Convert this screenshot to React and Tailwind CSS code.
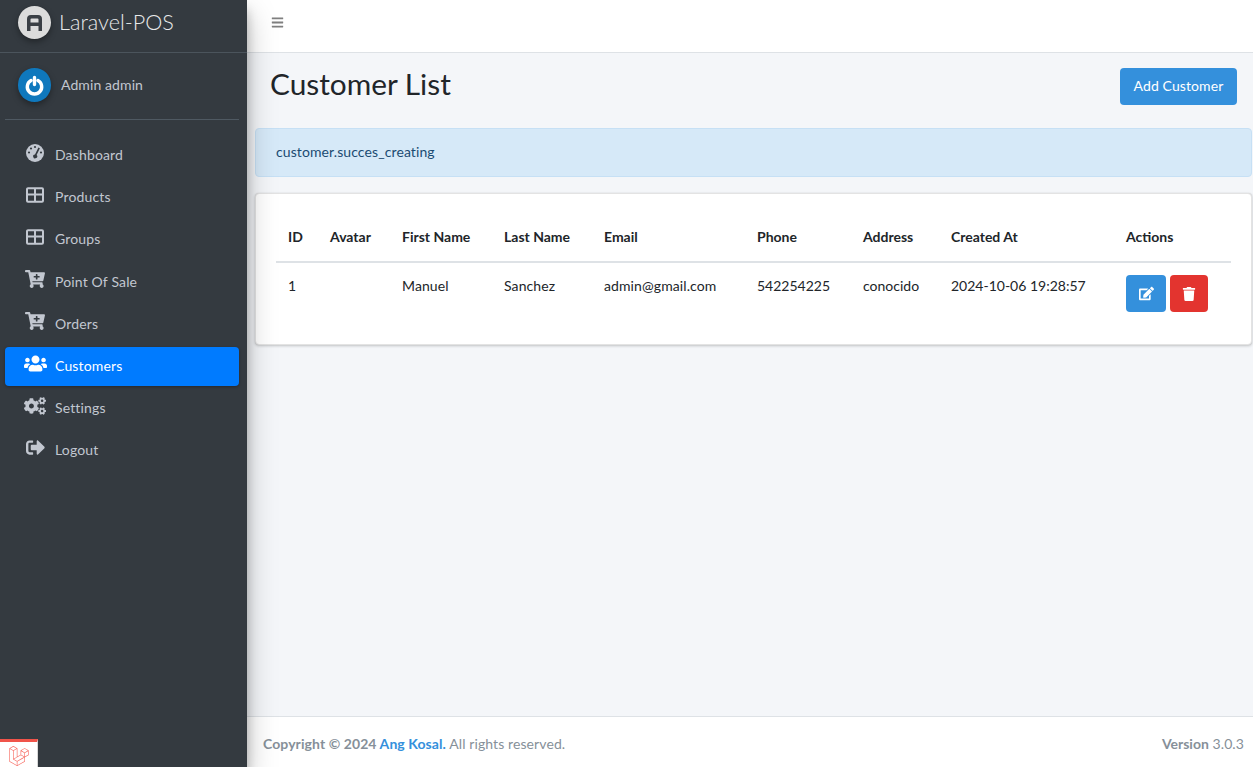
import React from "react";
import { FaCartPlus, FaUsers, FaCogs, FaSignOutAlt, FaEdit, FaTrash, FaBars } from "react-icons/fa";
import { SiLaravel } from "react-icons/si";

function TableIcon() {
  return (
    <svg width="18" height="16" viewBox="0 0 18 16" className="text-[#c2c7d0]">
      <path fill="none" stroke="currentColor" strokeWidth="2" d="M1 2.2a1 1 0 0 1 1-1h14a1 1 0 0 1 1 1v11.6a1 1 0 0 1-1 1H2a1 1 0 0 1-1-1zM1 7.5h16M9 1.2v13.6" />
    </svg>
  );
}

function GaugeIcon() {
  return (
    <svg width="18" height="18" viewBox="0 0 18 18">
      <circle cx="9" cy="9" r="9" fill="#c2c7d0" />
      <g fill="#343a40">
        <circle cx="5" cy="4.5" r="1.1" />
        <circle cx="9" cy="3" r="1.1" />
        <circle cx="3" cy="8.5" r="1.1" />
        <circle cx="15" cy="8.5" r="1.1" />
        <path d="M12.4 3.6l1.5.6L10.6 11a2 2 0 1 1-1.6-.6z" />
      </g>
    </svg>
  );
}

const nav = [
  { label: "Dashboard", icon: <GaugeIcon /> },
  { label: "Products", icon: <TableIcon /> },
  { label: "Groups", icon: <TableIcon /> },
  { label: "Point Of Sale", icon: <FaCartPlus size={20} /> },
  { label: "Orders", icon: <FaCartPlus size={20} /> },
  { label: "Customers", icon: <FaUsers size={23} />, active: true },
  { label: "Settings", icon: <FaCogs size={22} /> },
  { label: "Logout", icon: <FaSignOutAlt size={19} /> },
];

const heads = [
  ["ID", "w-[42px]"], ["Avatar", "w-[72px]"], ["First Name", "w-[102px]"], ["Last Name", "w-[100px]"],
  ["Email", "w-[153px]"], ["Phone", "w-[106px]"], ["Address", "w-[88px]"], ["Created At", "w-[175px]"], ["Actions", ""],
];
const cells = ["1", "", "Manuel", "Sanchez", "admin@gmail.com", "542254225", "conocido", "2024-10-06 19:28:57"];

export default function App() {
  return (
    <div className="flex h-[767px] w-[1253px] overflow-hidden bg-[#f4f6f9] text-[14px] tracking-[0.1px] text-[#212529] font-['Lato','Open_Sans',sans-serif]">
      <aside className="relative z-10 flex w-[247px] shrink-0 flex-col bg-[#343a40] shadow-[0_14px_28px_rgba(0,0,0,0.25),0_10px_10px_rgba(0,0,0,0.22)]">
        <div className="flex h-[53px] shrink-0 items-center gap-[8px] border-b border-[#4b545c] pb-[7px] pl-[18px]">
          <div className="flex h-[33px] w-[33px] items-center justify-center rounded-full bg-[#dcdcdc] shadow-[0_3px_6px_rgba(0,0,0,0.35)]">
            <svg width="19" height="19" viewBox="0 0 19 19">
              <path fill="#3a3f45" fillRule="evenodd" d="M2 18V6a4 4 0 0 1 4-4h7a4 4 0 0 1 4 4v12h-3.5v-5h-8v5zM5.5 9.5h8V6.5a1 1 0 0 0-1-1h-6a1 1 0 0 0-1 1z" />
            </svg>
          </div>
          <span className="text-[21.6px] font-light tracking-normal text-[#e8e9ea]">Laravel-POS</span>
        </div>
        <div className="ml-[5px] flex h-[67px] w-[234px] shrink-0 items-center gap-[10px] border-b border-[#4f5962] pl-[13px] pb-[2px]">
          <div className="flex h-[34px] w-[33px] items-center justify-center rounded-full bg-[#0f78bd] shadow-[0_3px_6px_rgba(0,0,0,0.35)]">
            <svg width="21" height="21" viewBox="0 0 21 21" fill="none" stroke="#fff" strokeWidth="3.4" strokeLinecap="round">
              <path d="M7 5.5a7.2 7.2 0 1 0 7 0M10.5 2.5v7" />
            </svg>
          </div>
          <span className="pb-[1px] text-[#c2c7d0]">Admin admin</span>
        </div>
        <nav className="ml-[5px] mt-[16px] flex w-[234px] flex-col gap-[3.2px]">
          {nav.map((n) => (
            <div
              key={n.label}
              className={`flex h-[39px] items-center rounded-[4px] ${n.active ? "bg-[#007bff] text-white shadow-[0_1px_3px_rgba(0,0,0,0.3)]" : "text-[#c2c7d0]"}`}
            >
              <span className="flex w-[50px] shrink-0 items-center justify-center pl-[10px] pb-[6px]">{n.icon}</span>
              <span className="pb-[2px] tracking-[0.15px]">{n.label}</span>
            </div>
          ))}
        </nav>
        <div className="mt-auto flex h-[28px] w-[38px] items-center justify-center border-t-[3px] border-r border-t-[#f0544a] border-r-[#d8d8d8] bg-white pt-[3px]">
          <SiLaravel size={20} className="text-[#f76b62]" />
        </div>
      </aside>

      <div className="flex min-w-0 flex-1 flex-col">
        <header className="flex h-[53px] shrink-0 items-center border-b border-[#dee2e6] bg-white pb-[7px] pl-[24px]">
          <FaBars size={13} className="text-[#7f7f7f]" />
        </header>
        <main className="flex-1 pl-[8px] pr-px">
          <div className="flex h-[75px] items-start justify-between pl-[15px] pr-[15px] pt-[13px]">
            <h1 className="text-[29.8px] leading-[1.2] tracking-normal text-[#212529]">Customer List</h1>
            <button className="mt-[2px] h-[37px] w-[117px] rounded-[4px] bg-[#3490dc] pb-[2px] text-white">Add Customer</button>
          </div>
          <div className="flex h-[49px] items-center rounded-[4px] border border-[#c6e0f5] bg-[#d6e9f8] pb-[2px] pl-[20px] text-[#1b4b72]">
            customer.succes_creating
          </div>
          <section className="mt-[16px] h-[152px] rounded-[4px] border border-[#e3e3e3] bg-white px-[20px] pt-[20px] shadow-[0_0_1px_rgba(0,0,0,0.125),0_1px_3px_rgba(0,0,0,0.2)]">
            <div className="flex h-[49px] items-center border-b-2 border-[#dee2e6] pb-[3px] pl-[12px] font-bold tracking-normal">
              {heads.map(([h, w]) => (
                <div key={h} className={`${w} shrink-0`}>{h}</div>
              ))}
            </div>
            <div className="flex pl-[12px] pt-[12px]">
              {cells.map((c, i) => (
                <div key={i} className={`${heads[i][1]} shrink-0 ${i > 4 ? "tracking-normal" : ""}`}>{c}</div>
              ))}
              <div className="flex gap-[4px]">
                <button className="flex h-[37px] w-[40px] items-center justify-center rounded-[4px] bg-[#3490dc] text-white"><FaEdit size={15} /></button>
                <button className="flex h-[37px] w-[38px] items-center justify-center rounded-[4px] bg-[#e3342f] text-white"><FaTrash size={14} /></button>
              </div>
            </div>
          </section>
        </main>
        <footer className="flex h-[51px] shrink-0 items-center justify-between border-t border-[#dee2e6] bg-white pl-[16px] pr-[9px] pt-[2px] text-[#869099]">
          <div><b className="tracking-[0.08px]">Copyright © 2024 <span className="text-[#3490dc]">Ang Kosal.</span></b> All rights reserved.</div>
          <div><b className="tracking-normal">Version</b> 3.0.3</div>
        </footer>
      </div>
    </div>
  );
}
